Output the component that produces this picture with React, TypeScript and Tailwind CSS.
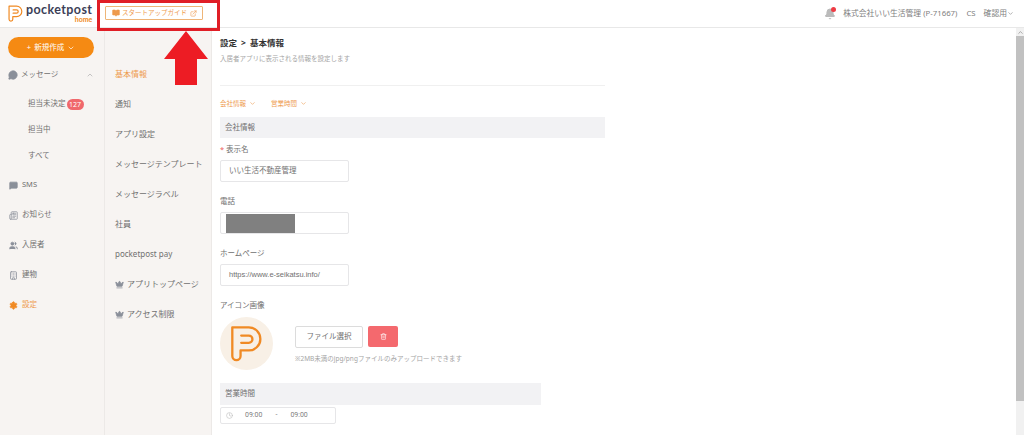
import React from "react";
import { ChevronDown, ChevronUp, ExternalLink, Clock, Trash2, Crown, Settings, Users, Building, Newspaper, MessageCircle, MessageSquare, Bell, BookOpen } from "lucide-react";

function Logo({ width, height, stroke }: { width: number; height: number; stroke: number }) {
  return (
    <svg width={width} height={height} viewBox="68 43 100 112" fill="none" stroke="#f08a24" strokeWidth={stroke} strokeLinecap="round" strokeLinejoin="round">
      <path d="M75 50 H125 A35 35 0 0 1 125 120 H100 V137 A12.5 12.5 0 0 1 75 137 Z" />
      <path d="M102 97 H125 A11 11 0 0 0 125 75 H102" />
    </svg>
  );
}

function SideItem({ icon, label, active }: { icon: React.ReactNode; label: string; active?: boolean }) {
  return (
    <div className={`flex items-center h-[30px] pl-[8px] gap-[4px] text-[7.5px] ${active ? "text-[#ee9a4d]" : "text-[#707070]"}`}>
      <span className="w-[10px] flex justify-center">{icon}</span>
      {label}
    </div>
  );
}

function SubItem({ label, badge }: { label: string; badge?: string }) {
  return (
    <div className="flex items-center h-[26px] pl-[28px] text-[7.5px] text-[#707070]">
      {label}
      {badge && <span className="ml-[1px] bg-[#f0686c] text-white rounded-full h-[11px] text-[7px] leading-[11px] w-[17px] text-center">{badge}</span>}
    </div>
  );
}

function MenuItem({ label, active, crown }: { label: string; active?: boolean; crown?: boolean }) {
  return (
    <div className={`flex items-center h-[30px] pl-[10px] gap-[3px] text-[8px] whitespace-nowrap ${active ? "text-[#ee9a4d]" : "text-[#707070]"}`}>
      {crown && <Crown size={9} className="text-[#8a8f99]" fill="#8a8f99" />}
      {label}
    </div>
  );
}

function Field({ value, latin, children }: { value?: string; latin?: boolean; children?: React.ReactNode }) {
  return (
    <div className={`w-[129px] h-[22px] bg-white border border-[#e6e6e8] rounded-[2px] flex items-center pl-[8px] text-[7.5px] text-[#707070] ${latin ? "font-['Liberation_Sans',sans-serif]" : ""}`}>
      {value}
      {children}
    </div>
  );
}

function Label({ children, className = "" }: { children: React.ReactNode; className?: string }) {
  return <div className={`text-[7.5px] leading-[12px] text-[#707070] ${className}`}>{children}</div>;
}

export default function App() {
  return (
    <div className="relative w-[1024px] h-[435px] overflow-hidden bg-white font-['Noto_Sans','Noto_Sans_CJK_JP',sans-serif]">
      <header className="h-[28px] border-b border-[#e8e8e8] flex items-center bg-white">
        <div className="w-[105px] flex items-center pl-[8px] gap-[3px] shrink-0">
          <Logo width={15} height={17} stroke={8} />
          <div className="flex flex-col items-end leading-none">
            <span className="font-['Lato',sans-serif] font-bold tracking-[0.4px] text-[12.5px] leading-[12px] text-[#3c3f58]">pocketpost</span>
            <span className="font-['Lato',sans-serif] font-bold text-[7px] leading-[7px] text-[#f08a24]">home</span>
          </div>
        </div>
        <div className="h-[14px] w-[98px] border border-[#eeb578] rounded-[1px] flex items-center pl-[6px] pr-[5px] text-[6.5px] text-[#ee9a4d] -mt-[1px]">
          <BookOpen size={8} fill="#ee9a4d" className="mr-[2px] shrink-0" />
          <span className="whitespace-nowrap flex-1">スタートアップガイド</span>
          <ExternalLink size={7} className="shrink-0" />
        </div>
        <div className="ml-auto flex items-center text-[7.8px] text-[#808080] pr-[10px] whitespace-nowrap">
          <span className="relative mr-[7px]">
            <Bell size={12} fill="#bbb" className="text-[#bbb]" />
            <span className="absolute -top-[1px] right-0 w-[5px] h-[5px] rounded-full bg-[#ee3b44]" />
          </span>
          <span>株式会社いい生活管理 (P-71667)</span>
          <span className="ml-[9px]">CS</span>
          <span className="ml-[8px]">確認用</span>
          <ChevronDown size={7} />
        </div>
      </header>

      <div className="flex h-[407px]">
        <aside className="w-[105px] shrink-0 bg-[#f7f4f2] border-r border-[#ece9e7] pt-[9px]">
          <div className="mx-[8px] w-[86px] h-[21px] rounded-full bg-[#f58a13] text-white text-[7.5px] flex items-center justify-center gap-[3px]">
            <span>+</span>
            <span>新規作成</span>
            <ChevronDown size={8} />
          </div>
          <div className="mt-[2px]">
            <div className="flex items-center h-[30px] pl-[8px] pr-[10px] gap-[3px] text-[7.5px] text-[#707070]">
              <MessageCircle size={10} fill="#8a8f99" className="text-[#8a8f99]" />
              <span className="flex-1">メッセージ</span>
              <ChevronUp size={8} className="text-[#aaa]" />
            </div>
            <div className="h-[1px]" />
            <SubItem label="担当未決定" badge="127" />
            <SubItem label="担当中" />
            <SubItem label="すべて" />
            <div className="h-[1px]" />
            <SideItem icon={<MessageSquare size={9} fill="#8a8f99" className="text-[#8a8f99]" />} label="SMS" />
            <SideItem icon={<Newspaper size={9} className="text-[#8a8f99]" />} label="お知らせ" />
            <SideItem icon={<Users size={9} fill="#8a8f99" className="text-[#8a8f99]" />} label="入居者" />
            <SideItem icon={<Building size={9} className="text-[#8a8f99]" />} label="建物" />
            <SideItem active icon={<Settings size={9} fill="#f08a24" className="text-[#f08a24]" />} label="設定" />
          </div>
        </aside>

        <nav className="w-[107px] shrink-0 bg-[#f7f4f2] border-r border-[#ece9e7] pt-[31px]">
          <MenuItem label="基本情報" active />
          <MenuItem label="通知" />
          <MenuItem label="アプリ設定" />
          <MenuItem label="メッセージテンプレート" />
          <MenuItem label="メッセージラベル" />
          <MenuItem label="社員" />
          <MenuItem label="pocketpost pay" />
          <MenuItem label="アプリトップページ" crown />
          <MenuItem label="アクセス制限" crown />
        </nav>

        <main className="flex-1 pl-[8px] pt-[8px]">
          <div className="w-[385px]">
            <h1 className="text-[8.5px] leading-[13px] font-bold text-[#333] flex gap-[4px]"><span>設定</span><span>&gt;</span><span>基本情報</span></h1>
            <p className="mt-[5px] text-[6.5px] leading-[9px] text-[#a5a5a5]">入居者アプリに表示される情報を設定します</p>
            <div className="mt-[22px] border-t border-[#f0f0f0]" />
            <div className="mt-[13px] flex gap-[15px] text-[6.5px] leading-[9px] text-[#ee9a4d]">
              <span className="flex items-center gap-[3px]">会社情報<ChevronDown size={7} /></span>
              <span className="flex items-center gap-[3px]">営業時間<ChevronDown size={7} /></span>
            </div>
            <div className="mt-[9px] h-[21px] bg-[#f2f2f4] pl-[5px] flex items-center text-[7.5px] text-[#707070]">会社情報</div>
            <Label className="mt-[5px]"><span className="text-[#ee5a5a]">* </span>表示名</Label>
            <div className="mt-[5px]"><Field value="いい生活不動産管理" /></div>
            <Label className="mt-[13px]">電話</Label>
            <div className="mt-[5px]">
              <Field>
                <div className="-ml-[3px] w-[69px] h-[19px] bg-[#808080]" />
              </Field>
            </div>
            <Label className="mt-[13px]">ホームページ</Label>
            <div className="mt-[5px]"><Field latin value="https://www.e-seikatsu.info/" /></div>
            <Label className="mt-[13px]">アイコン画像</Label>
            <div className="mt-[6px] flex items-start">
              <div className="w-[53px] h-[53px] rounded-full bg-[#f8f0e6] flex items-center justify-center">
                <Logo width={33} height={37} stroke={7} />
              </div>
              <div className="ml-[22px] mt-[9px]">
                <div className="flex items-start gap-[5px]">
                  <div className="w-[68px] h-[22px] bg-white border border-[#dcdcdc] rounded-[2px] flex items-center justify-center text-[7.5px] text-[#707070]">ファイル選択</div>
                  <div className="w-[30px] h-[21px] bg-[#f4696e] rounded-[2px] flex items-center justify-center">
                    <Trash2 size={7} className="text-white" />
                  </div>
                </div>
                <div className="mt-[6px] text-[6.5px] leading-[9px] text-[#a5a5a5] whitespace-nowrap">※2MB未満のjpg/pngファイルのみアップロードできます</div>
              </div>
            </div>
            <div className="mt-[13px] w-[321px] h-[22px] bg-[#f2f2f4] pl-[5px] flex items-center text-[7.5px] text-[#707070]">営業時間</div>
            <div className="mt-[2px] w-[116px] h-[17px] border border-[#e6e6e8] rounded-[2px] flex items-center pl-[5px] text-[7px] text-[#808080] font-['Roboto',sans-serif]">
              <Clock size={7} className="text-[#bbb]" />
              <span className="ml-[12px]">09:00</span>
              <span className="ml-[13px]">-</span>
              <span className="ml-[13px]">09:00</span>
            </div>
          </div>
        </main>

        <div className="w-[8px] shrink-0 bg-[#f1f1f1] flex flex-col">
          <div className="h-[8px] flex items-center justify-center">
            <ChevronUp size={7} className="text-[#777]" />
          </div>
          <div className="h-[365px] bg-[#c1c1c1]" />
        </div>
      </div>

      {/* annotation */}
      <div className="absolute left-[97px] top-0 w-[123px] h-[31px] border-[3px] border-[#e01e26]" />
      <svg className="absolute left-[163px] top-[30px]" width="46" height="56" viewBox="0 0 46 56">
        <path d="M23 1 L45 29 H34 V55 H12 V29 H1 Z" fill="#ed1c24" />
      </svg>
    </div>
  );
}
